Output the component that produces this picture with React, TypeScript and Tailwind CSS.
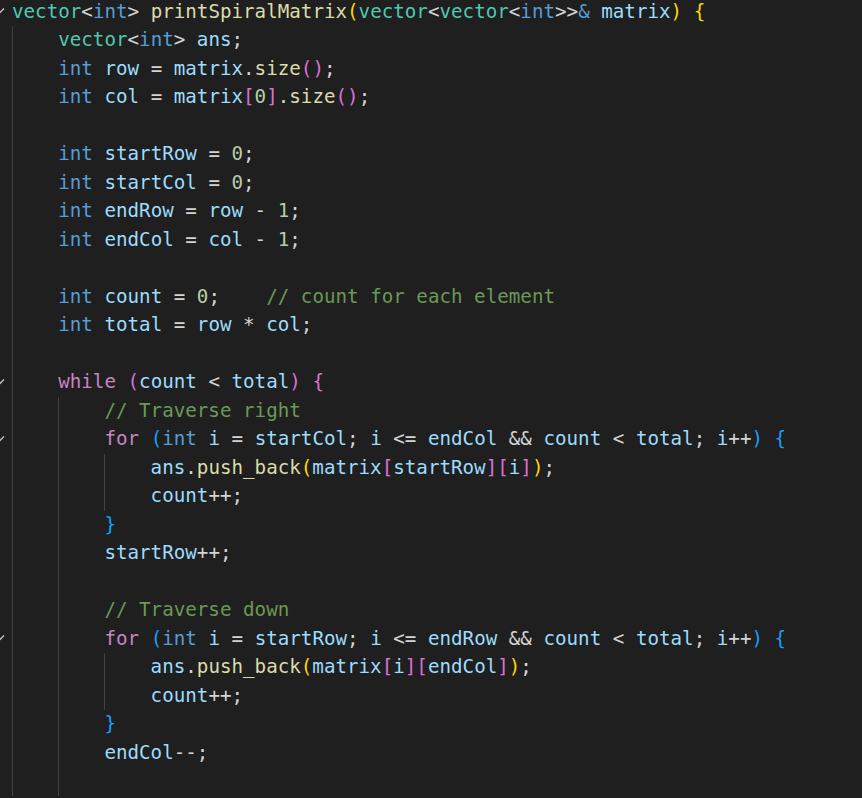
import React from "react";

type Tok = [string, string];

const T = "text-[#4ec9b0]";
const K = "text-[#569cd6]";
const F = "text-[#dcdcaa]";
const V = "text-[#9cdcfe]";
const N = "text-[#b5cea8]";
const C = "text-[#6a9955]";
const P = "text-[#c586c0]";
const O = "text-[#d4d4d4]";
const B1 = "text-[#ffd700]";
const B2 = "text-[#da70d6]";
const B3 = "text-[#179fff]";

type Line = { g: number; toks: Tok[]; fold?: boolean };

const forLine = (start: string, end: string): Tok[] => [
  ["for", P],
  [" ", O],
  ["(", B3],
  ["int", K],
  [" ", O],
  ["i", V],
  [" = ", O],
  [start, V],
  ["; ", O],
  ["i", V],
  [" <= ", O],
  [end, V],
  [" && ", O],
  ["count", V],
  [" < ", O],
  ["total", V],
  ["; ", O],
  ["i", V],
  ["++", O],
  [")", B3],
  [" ", O],
  ["{", B3],
];

const lines: Line[] = [
  {
    g: 0,
    fold: true,
    toks: [
      ["vector", T],
      ["<", O],
      ["int", K],
      [">", O],
      [" ", O],
      ["printSpiralMatrix", F],
      ["(", B1],
      ["vector", T],
      ["<", O],
      ["vector", T],
      ["<", O],
      ["int", K],
      [">>", O],
      ["&", K],
      [" ", O],
      ["matrix", V],
      [")", B1],
      [" ", O],
      ["{", B1],
    ],
  },
  {
    g: 1,
    toks: [
      ["vector", T],
      ["<", O],
      ["int", K],
      [">", O],
      [" ", O],
      ["ans", V],
      [";", O],
    ],
  },
  {
    g: 1,
    toks: [
      ["int", K],
      [" ", O],
      ["row", V],
      [" = ", O],
      ["matrix", V],
      [".", O],
      ["size", F],
      ["(", B2],
      [")", B2],
      [";", O],
    ],
  },
  {
    g: 1,
    toks: [
      ["int", K],
      [" ", O],
      ["col", V],
      [" = ", O],
      ["matrix", V],
      ["[", B2],
      ["0", N],
      ["]", B2],
      [".", O],
      ["size", F],
      ["(", B2],
      [")", B2],
      [";", O],
    ],
  },
  { g: 1, toks: [] },
  {
    g: 1,
    toks: [
      ["int", K],
      [" ", O],
      ["startRow", V],
      [" = ", O],
      ["0", N],
      [";", O],
    ],
  },
  {
    g: 1,
    toks: [
      ["int", K],
      [" ", O],
      ["startCol", V],
      [" = ", O],
      ["0", N],
      [";", O],
    ],
  },
  {
    g: 1,
    toks: [
      ["int", K],
      [" ", O],
      ["endRow", V],
      [" = ", O],
      ["row", V],
      [" - ", O],
      ["1", N],
      [";", O],
    ],
  },
  {
    g: 1,
    toks: [
      ["int", K],
      [" ", O],
      ["endCol", V],
      [" = ", O],
      ["col", V],
      [" - ", O],
      ["1", N],
      [";", O],
    ],
  },
  { g: 1, toks: [] },
  {
    g: 1,
    toks: [
      ["int", K],
      [" ", O],
      ["count", V],
      [" = ", O],
      ["0", N],
      [";", O],
      ["    ", O],
      ["// count for each element", C],
    ],
  },
  {
    g: 1,
    toks: [
      ["int", K],
      [" ", O],
      ["total", V],
      [" = ", O],
      ["row", V],
      [" * ", O],
      ["col", V],
      [";", O],
    ],
  },
  { g: 1, toks: [] },
  {
    g: 1,
    fold: true,
    toks: [
      ["while", P],
      [" ", O],
      ["(", B2],
      ["count", V],
      [" < ", O],
      ["total", V],
      [")", B2],
      [" ", O],
      ["{", B2],
    ],
  },
  { g: 2, toks: [["// Traverse right", C]] },
  { g: 2, fold: true, toks: forLine("startCol", "endCol") },
  {
    g: 3,
    toks: [
      ["ans", V],
      [".", O],
      ["push_back", F],
      ["(", B1],
      ["matrix", V],
      ["[", B2],
      ["startRow", V],
      ["]", B2],
      ["[", B2],
      ["i", V],
      ["]", B2],
      [")", B1],
      [";", O],
    ],
  },
  {
    g: 3,
    toks: [
      ["count", V],
      ["++", O],
      [";", O],
    ],
  },
  { g: 2, toks: [["}", B3]] },
  {
    g: 2,
    toks: [
      ["startRow", V],
      ["++", O],
      [";", O],
    ],
  },
  { g: 2, toks: [] },
  { g: 2, toks: [["// Traverse down", C]] },
  { g: 2, fold: true, toks: forLine("startRow", "endRow") },
  {
    g: 3,
    toks: [
      ["ans", V],
      [".", O],
      ["push_back", F],
      ["(", B1],
      ["matrix", V],
      ["[", B2],
      ["i", V],
      ["]", B2],
      ["[", B2],
      ["endCol", V],
      ["]", B2],
      [")", B1],
      [";", O],
    ],
  },
  {
    g: 3,
    toks: [
      ["count", V],
      ["++", O],
      [";", O],
    ],
  },
  { g: 2, toks: [["}", B3]] },
  {
    g: 2,
    toks: [
      ["endCol", V],
      ["--", O],
      [";", O],
    ],
  },
  { g: 2, toks: [] },
];

function Chevron() {
  return (
    <svg
      className="absolute left-[-17px] top-[8.5px]"
      width="10"
      height="8"
      viewBox="0 0 10 8"
      fill="none"
    >
      <path d="M1 2.5 L5 6.5 L9 2.5" stroke="#c5c5c5" strokeWidth="1.3" />
    </svg>
  );
}

export default function App() {
  return (
    <div className="h-[798px] w-full overflow-hidden bg-[#1f1f1f]">
      <div
        className="mt-[-2.25px] pl-[12px] text-[19.2px]"
        style={{ fontFamily: '"DejaVu Sans Mono", "Liberation Mono", monospace' }}
      >
        {lines.map((ln, i) => (
          <div key={i} className="relative flex h-[28.5px] whitespace-pre">
            {ln.fold && <Chevron />}
            {Array.from({ length: ln.g }).map((_, j) => (
              <span key={j} className="h-full w-[4ch] shrink-0 border-l border-[#404040]" />
            ))}
            <span className="leading-[28.5px]">
              {ln.toks.map(([t, c], k) => (
                <span key={k} className={c}>
                  {t}
                </span>
              ))}
            </span>
          </div>
        ))}
      </div>
    </div>
  );
}
